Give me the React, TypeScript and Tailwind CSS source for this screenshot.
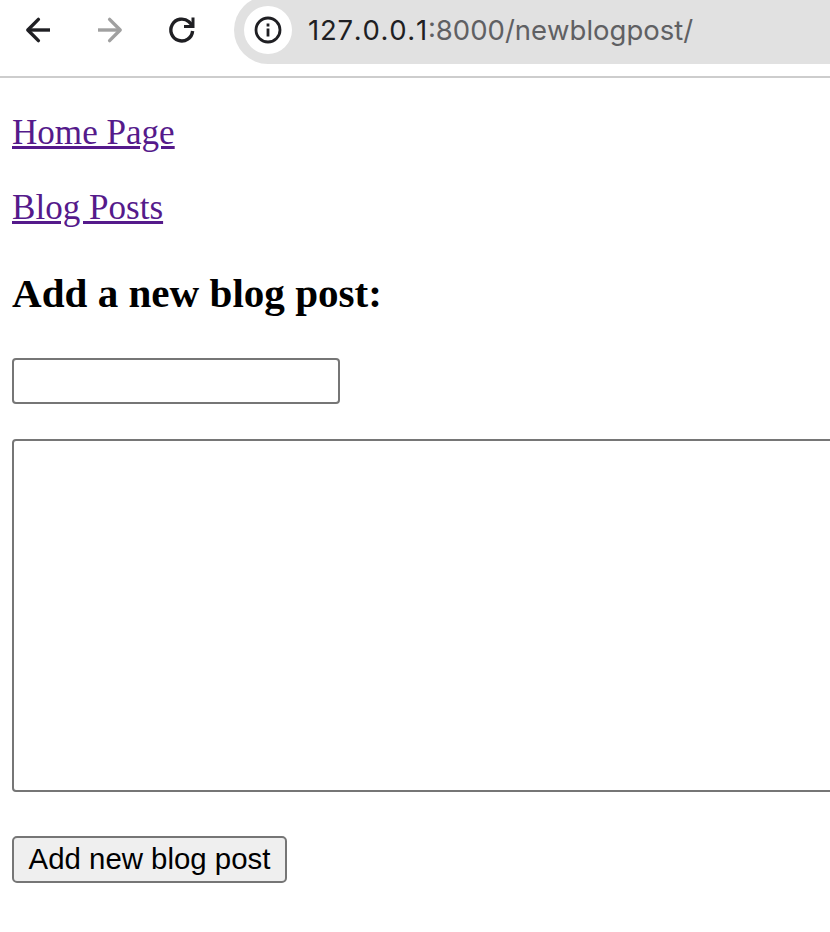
export default function App() {
  return (
    <div className="h-[932px] w-[830px] overflow-hidden bg-white font-['Liberation_Serif',serif] text-black">
      <header className="flex h-[78px] items-start border-b-2 border-[#cdcdcd]">
        <div className="flex h-[60px] w-[234px] shrink-0 items-center">
          <svg className="ml-[20px] size-9" viewBox="0 0 36 36" fill="none" stroke="#1f1f23" strokeWidth="3.4"><path d="M30 18H8" /><path d="M18.4 7.4 7.8 18l10.6 10.6" strokeLinecap="round" strokeLinejoin="round" /></svg>
          <svg className="ml-[36px] size-9" viewBox="0 0 36 36" fill="none" stroke="#a0a0a0" strokeWidth="3.4"><path d="M6 18h22" /><path d="M17.6 7.4 28.2 18 17.6 28.6" strokeLinecap="round" strokeLinejoin="round" /></svg>
          <svg className="ml-[36px] size-9" viewBox="0 0 36 36" fill="none" stroke="#1f1f23" strokeWidth="3.4"><path d="M28.6 19A10.9 10.9 0 1 1 24.9 9.8L28.5 13.4" /><path d="M30.5 5.5v10.6H20v-3h5.6l1.9-2V5.5z" fill="#1f1f23" stroke="none" /></svg>
        </div>
        <div className="-mt-1 flex h-[68px] grow items-center rounded-l-full bg-[#e1e1e1] pl-[10px]">
          <div className="flex size-12 shrink-0 items-center justify-center rounded-full bg-white">
            <svg className="size-7" viewBox="0 0 28 28" fill="none" stroke="#1f1f23" strokeWidth="2.8"><circle cx="14" cy="14" r="12" /><path d="M14 12.4v8.2M14 7.6v2.8" /></svg>
          </div>
          <div className="mb-px ml-4 whitespace-nowrap font-[Inter,sans-serif] text-[27.5px] leading-[34px] text-[#5f6063] [font-kerning:none]"><span className="tracking-[0.75px] text-[#1f1f23]">127.0.0.1</span>:8000/newblogpost/</div>
        </div>
      </header>
      <main className="flex flex-col items-start pl-3">
        <a className="mt-[35px] text-[35.1px] leading-[40px] text-[#551a8b] underline decoration-[3px] underline-offset-[2px]">Home Page</a>
        <a className="mt-[35px] text-[35.1px] leading-[40px] text-[#551a8b] underline decoration-[3px] underline-offset-[2px]">Blog Posts</a>
        <h3 className="mt-[41px] text-[41.1px] leading-[48px] font-bold">Add a new blog post:</h3>
        <input className="mt-[41px] h-[46px] w-[328px] rounded-[4px] border-2 border-[#767676] bg-white" />
        <textarea className="mt-[35px] h-[353px] w-[900px] shrink-0 resize-none rounded-[4px] border-2 border-[#767676] bg-white" />
        <button className="mt-[44px] h-[47px] w-[275px] rounded-[5px] border-2 border-[#767676] bg-[#efefef] pb-[2px] font-['Liberation_Sans',sans-serif] text-[29.4px] leading-[41px] whitespace-nowrap">Add new blog post</button>
      </main>
    </div>
  );
}
